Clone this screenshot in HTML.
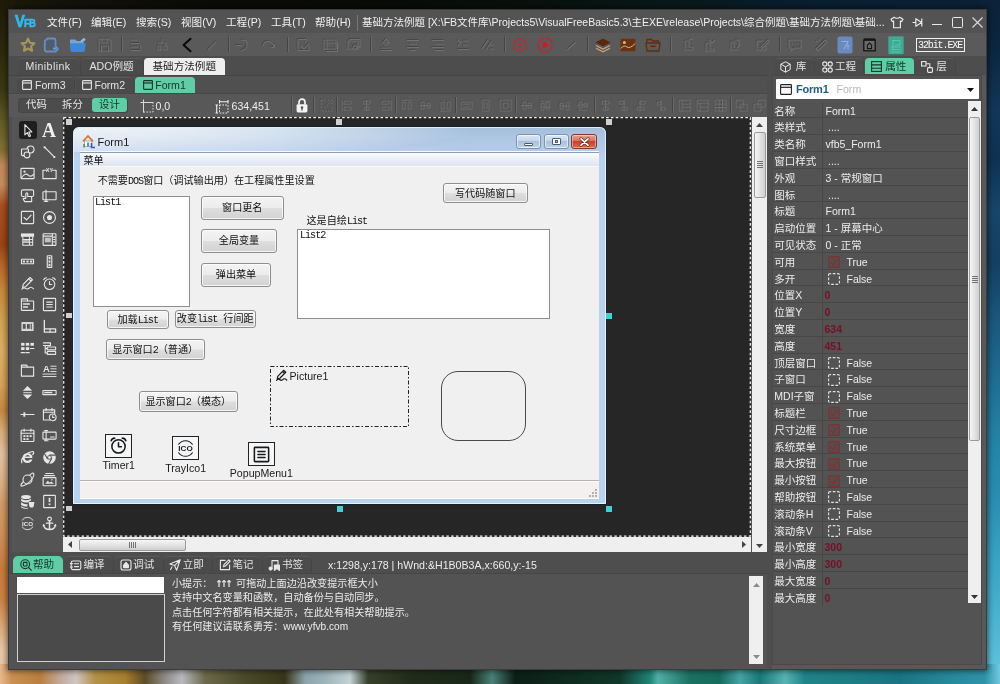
<!DOCTYPE html>
<html lang="zh-CN">
<head>
<meta charset="utf-8">
<title>VisualFreeBasic</title>
<style>
*{box-sizing:border-box;margin:0;padding:0}
html,body{width:1000px;height:684px;overflow:hidden;background:#0a0d10}
body{position:relative;font-family:"Liberation Sans","Noto Sans CJK SC",sans-serif;font-size:10.5px;color:#e6e6e6;-webkit-font-smoothing:antialiased}
.abs,.win div,.win span,.win svg,.bg div{position:absolute}
.t{white-space:nowrap;line-height:1}
svg{overflow:visible}
/* wallpaper strips */
.bg{position:absolute;left:0;top:0;width:1000px;height:684px;overflow:hidden}
.win{will-change:transform;position:absolute;left:9px;top:10px;width:977px;height:659px;background:#535353;box-shadow:0 0 0 1px #3c3c3c, 0 0 6px 2px rgba(0,0,0,.55)}
</style>
</head>
<body>

<div class="bg">
  <!-- top strip -->
  <div style="left:0;top:0;width:1000px;height:12px;background:linear-gradient(90deg,#1d1b08 0,#14130a 60px,#0b0b07 200px,#090c08 400px,#08120e 560px,#091a1e 700px,#0a1f33 820px,#0b2238 1000px)"></div>
  <!-- left strip -->
  <div style="left:0;top:0;width:14px;height:684px;background:linear-gradient(180deg,#1d1b08 0,#2a250c 40px,#3d3a14 90px,#65602a 125px,#857034 150px,#c48a5c 165px,#c98e62 185px,#a9501f 205px,#9c4517 245px,#b8672a 265px,#c88a3c 290px,#d3a352 320px,#dcb066 350px,#d8a458 385px,#c88844 410px,#d9ac78 430px,#e3c4a2 455px,#dcb48a 480px,#d39c66 505px,#d0905a 535px,#c87c3c 570px,#cc8446 600px,#dba878 625px,#e8c8a8 650px,#e9cbad 684px)"></div>
  <!-- right strip -->
  <div style="left:980px;top:0;width:20px;height:684px;background:linear-gradient(180deg,#0b2238 0,#0c2740 50px,#123759 110px,#0f3252 160px,#17466b 210px,#134063 260px,#1b577c 320px,#1f6e92 380px,#2583a6 440px,#2a8fb2 500px,#3aa3c4 560px,#4cb4d0 620px,#66c6e0 684px)"></div>
  <!-- bottom strip -->
  <div style="left:0;top:664px;width:1000px;height:20px;background:linear-gradient(90deg,#e8b890 0,#c99050 12px,#b88040 40px,#c3ada0 62px,#d0c6c2 76px,#b49248 95px,#a87f2e 125px,#5e4d28 145px,#8f8c88 165px,#b9b9c0 182px,#6c6a4a 205px,#4a4a2a 245px,#39371a 285px,#8ba3ab 305px,#9db4ba 325px,#c4d3d3 350px,#36402a 368px,#222e1c 410px,#182818 470px,#4a8278 492px,#0c2018 515px,#0e2a1e 560px,#10382a 620px,#1f8676 650px,#52b0a8 658px,#1a7262 690px,#176c5e 720px,#46a4a4 740px,#187a78 760px,#58b4b4 785px,#1f8488 805px,#1d7e86 850px,#1a7484 900px,#268a9c 950px,#2f94aa 985px,#70c8e0 1000px)"></div>
</div>

<style>
.menu .t{top:7px;font-size:10.6px;color:#f0f0f0}
.tbsep{width:1px;height:15px;top:28px;background:#6a6a6a;box-shadow:-1px 0 0 #444}
.ico{stroke:#6b6b6b;fill:none;stroke-width:1.2}
.tab{height:18px;border-radius:4px 4px 0 0;background:#4b4b4b;color:#e2e2e2;font-size:10.6px;line-height:17px;text-align:center;white-space:nowrap;box-shadow:inset 0 1px 0 #595959, 1px 0 0 #454545}
.tab.on{background:#5fcda6;color:#17352a;box-shadow:none}
.tab.wh{background:#eeeeee;color:#222;box-shadow:none}
</style>
<div class="win">
<!-- ===== menu bar (win-relative coords: x-9, y-10) ===== -->
<div class="menu" style="left:0;top:0;width:977px;height:23px">
  <span class="t" style="left:6px;top:3.6px;font-family:'Liberation Sans',sans-serif;font-weight:bold;font-size:16px;color:#2fbbee;letter-spacing:-1px;-webkit-text-stroke:0.7px #2fbbee;transform:scaleX(.92);transform-origin:0 0">V</span>
  <span class="t" style="left:15px;top:8px;font-family:'Liberation Sans',sans-serif;font-weight:bold;font-size:10.5px;color:#2fbbee;letter-spacing:-0.9px;-webkit-text-stroke:0.5px #2fbbee;transform:scaleX(.9);transform-origin:0 0">FB</span>
  <span class="t" style="left:38px">文件(F)</span>
  <span class="t" style="left:82px">编辑(E)</span>
  <span class="t" style="left:127px">搜索(S)</span>
  <span class="t" style="left:172px">视图(V)</span>
  <span class="t" style="left:217px">工程(P)</span>
  <span class="t" style="left:262px">工具(T)</span>
  <span class="t" style="left:306px">帮助(H)</span>
  <div style="left:348px;top:5px;width:1px;height:16px;background:#777"></div>
  <span class="t" id="ttl" style="left:353px;font-size:10.5px">基础方法例题 [X:\FB文件库\Projects5\VisualFreeBasic5.3\主EXE\release\Projects\综合例题\基础方法例题\基础...</span>
  <!-- caption icons -->
  <svg style="left:881px;top:6px" width="14" height="13" viewBox="0 0 14 13"><path d="M4.2 1.2 L1 3.2 L2.3 5.6 L3.6 5 L3.6 11.8 L10.4 11.8 L10.4 5 L11.7 5.6 L13 3.2 L9.8 1.2 C9 2.6 5 2.6 4.2 1.2 Z" fill="none" stroke="#efefef" stroke-width="1.1" stroke-linejoin="round"/></svg>
  <svg style="left:903px;top:7px" width="12" height="11" viewBox="0 0 12 11"><path d="M0.5 5.5 H4 M3.8 1.2 V9.8 M3.8 1.8 L9.6 5.5 L3.8 9.2 M9.8 1.5 V9.5" fill="none" stroke="#efefef" stroke-width="1.1"/></svg>
  <div style="left:923px;top:14px;width:10px;height:1.4px;background:#e8e8e8"></div>
  <div style="left:943px;top:7px;width:11px;height:11px;border:1.3px solid #e8e8e8;border-radius:1.5px"></div>
  <svg style="left:963px;top:7px" width="11" height="11" viewBox="0 0 11 11"><path d="M0.5 0.5 L10.5 10.5 M10.5 0.5 L0.5 10.5" stroke="#dcdcdc" stroke-width="1.1"/></svg>
</div>

<!-- ===== toolbar ===== -->
<div style="left:0;top:23px;width:977px;height:24px;background:#5a5a5a"></div>
<svg style="left:10.5px;top:27px" width="16" height="16" viewBox="0 0 16 16"><path d="M8 1.6 L9.9 5.7 L14.4 6.2 L11.1 9.3 L12 13.8 L8 11.5 L4 13.8 L4.9 9.3 L1.6 6.2 L6.1 5.7 Z" fill="none" stroke="#a5975b" stroke-width="2.1" stroke-linejoin="round"/></svg>
<svg style="left:34px;top:27px" width="18" height="16" viewBox="0 0 18 16"><path d="M4.5 1.5 H11 Q12.5 1.5 12.5 3 V9 L15 12 L12.5 14.5 H3 Q1.8 14.5 1.8 13 V4 Z" fill="none" stroke="#5f8fcb" stroke-width="1.8" stroke-linejoin="round"/><path d="M6.2 4 H9.2 V9.5 H6.2 Z" fill="#3e5f93"/><path d="M10 11.5 L13.5 11.5" stroke="#5fa0e6" stroke-width="2"/></svg>
<svg style="left:59.5px;top:27px" width="18" height="16" viewBox="0 0 18 16"><path d="M1 7 V2.4 H6.4 L7.8 4 H11.6 L15 0.8 L17 2.6 L14.6 5 V7 Z" fill="#7ba3d4"/><path d="M12 4.4 L15 1.6" stroke="#a9c6ea" stroke-width="1.2"/><path d="M1 6.2 H16 Q17 6.2 16.8 7.2 L15.8 14 Q15.6 15 14.6 15 H2.6 Q1.6 15 1.5 14 L0.8 7.2 Q0.8 6.2 1.8 6.2Z" fill="#3f86d4"/></svg>
<svg style="left:87.5px;top:27px" width="16" height="16" viewBox="0 0 16 16"><g fill="none" stroke="#424242" stroke-width="1.1" transform="translate(-0.7,-0.7)"><path d="M2 2 H12 L14 4 V14 H2 Z M5 2 V6 H10 V2 M4.5 14 V9 H11.5 V14"/></g><g fill="none" stroke="#717171" stroke-width="1.1"><path d="M2 2 H12 L14 4 V14 H2 Z M5 2 V6 H10 V2 M4.5 14 V9 H11.5 V14"/></g></svg>
<div class="tbsep" style="left:113px;top:27px"></div>
<svg style="left:119px;top:27px" width="16" height="16" viewBox="0 0 16 16"><g fill="none" stroke="#424242" stroke-width="1.1" transform="translate(-0.7,-0.7)"><path d="M3 3 H10 M3 6.5 H12 M3 10 H11 M3 13.5 H13 M12 8 Q14 9.5 12 12"/></g><g fill="none" stroke="#717171" stroke-width="1.1"><path d="M3 3 H10 M3 6.5 H12 M3 10 H11 M3 13.5 H13 M12 8 Q14 9.5 12 12"/></g></svg>
<svg style="left:145px;top:27px" width="16" height="16" viewBox="0 0 16 16"><g fill="none" stroke="#424242" stroke-width="1.1" transform="translate(-0.7,-0.7)"><path d="M8 2 V6 M4 6 H12 V9 M4 9 H7 V13 H4 Z M10 9 H13 V13 H10 Z"/></g><g fill="none" stroke="#717171" stroke-width="1.1"><path d="M8 2 V6 M4 6 H12 V9 M4 9 H7 V13 H4 Z M10 9 H13 V13 H10 Z"/></g></svg>
<svg style="left:169.5px;top:27px" width="16" height="16" viewBox="0 0 16 16"><path d="M11.5 1.8 L4.6 8 L11.5 14.2" fill="none" stroke="#0a0a0a" stroke-width="2.1" stroke-linecap="round" stroke-linejoin="round"/></svg>
<svg style="left:195px;top:27px" width="16" height="16" viewBox="0 0 16 16"><g fill="none" stroke="#424242" stroke-width="1.1" transform="translate(-0.7,-0.7)"><path d="M4 13 L12 5"/></g><g fill="none" stroke="#717171" stroke-width="1.1"><path d="M4 13 L12 5"/></g></svg>
<div class="tbsep" style="left:220px;top:27px"></div>
<svg style="left:225px;top:27px" width="16" height="16" viewBox="0 0 16 16"><g fill="none" stroke="#424242" stroke-width="1.1" transform="translate(-0.7,-0.7)"><path d="M1.5 8.5 H8 M7 3 Q13.5 2.5 13 8 Q12.4 13 6.5 14"/></g><g fill="none" stroke="#717171" stroke-width="1.1"><path d="M1.5 8.5 H8 M7 3 Q13.5 2.5 13 8 Q12.4 13 6.5 14"/></g></svg>
<svg style="left:251px;top:27px" width="16" height="16" viewBox="0 0 16 16"><g fill="none" stroke="#424242" stroke-width="1.1" transform="translate(-0.7,-0.7)"><path d="M3 9 Q4 3.5 9 4.5 Q13 5.5 14 11 M14 11 L14.5 7 M14 11 L10.5 10"/></g><g fill="none" stroke="#717171" stroke-width="1.1"><path d="M3 9 Q4 3.5 9 4.5 Q13 5.5 14 11 M14 11 L14.5 7 M14 11 L10.5 10"/></g></svg>
<div class="tbsep" style="left:278.5px;top:27px"></div>
<svg style="left:287px;top:27px" width="16" height="16" viewBox="0 0 16 16"><g fill="none" stroke="#424242" stroke-width="1.1" transform="translate(-0.7,-0.7)"><path d="M2 2.5 H10 V6 M2 2.5 V13.5 H13 V8 M5 9 L8 12 L13 6"/></g><g fill="none" stroke="#717171" stroke-width="1.1"><path d="M2 2.5 H10 V6 M2 2.5 V13.5 H13 V8 M5 9 L8 12 L13 6"/></g></svg>
<svg style="left:313px;top:27px" width="16" height="16" viewBox="0 0 16 16"><g fill="none" stroke="#424242" stroke-width="1.1" transform="translate(-0.7,-0.7)"><path d="M2 3 H14 V12 H2 Z M5 3 V12 M5 6 H14 M4 14.5 H15.5 V5"/></g><g fill="none" stroke="#717171" stroke-width="1.1"><path d="M2 3 H14 V12 H2 Z M5 3 V12 M5 6 H14 M4 14.5 H15.5 V5"/></g></svg>
<svg style="left:337px;top:27px" width="16" height="16" viewBox="0 0 16 16"><g fill="none" stroke="#424242" stroke-width="1.1" transform="translate(-0.7,-0.7)"><path d="M2 4 H12 V12 H2 Z M4 4 V2.5 H14 V10 H12 M9 8.5 a2 2 0 1 0 0.1 0"/></g><g fill="none" stroke="#717171" stroke-width="1.1"><path d="M2 4 H12 V12 H2 Z M4 4 V2.5 H14 V10 H12 M9 8.5 a2 2 0 1 0 0.1 0"/></g></svg>
<div class="tbsep" style="left:361.5px;top:27px"></div>
<svg style="left:369px;top:27px" width="16" height="16" viewBox="0 0 16 16"><g fill="none" stroke="#424242" stroke-width="1.1" transform="translate(-0.7,-0.7)"><path d="M2 13.5 H14 M3 11 H12 M6 8 H10 M8 2 L11 6 H5 Z"/></g><g fill="none" stroke="#717171" stroke-width="1.1"><path d="M2 13.5 H14 M3 11 H12 M6 8 H10 M8 2 L11 6 H5 Z"/></g></svg>
<svg style="left:395.5px;top:27px" width="16" height="16" viewBox="0 0 16 16"><g fill="none" stroke="#424242" stroke-width="1.1" transform="translate(-0.7,-0.7)"><path d="M2 3.5 H14 M4 7 H12 M2 10.5 H14 M5 13.5 H11"/></g><g fill="none" stroke="#717171" stroke-width="1.1"><path d="M2 3.5 H14 M4 7 H12 M2 10.5 H14 M5 13.5 H11"/></g></svg>
<svg style="left:420.5px;top:27px" width="16" height="16" viewBox="0 0 16 16"><g fill="none" stroke="#424242" stroke-width="1.1" transform="translate(-0.7,-0.7)"><path d="M2 3.5 H14 M5 7 H14 M2 10.5 H14 M5 13.5 H14"/></g><g fill="none" stroke="#717171" stroke-width="1.1"><path d="M2 3.5 H14 M5 7 H14 M2 10.5 H14 M5 13.5 H14"/></g></svg>
<svg style="left:445.5px;top:27px" width="16" height="16" viewBox="0 0 16 16"><g fill="none" stroke="#424242" stroke-width="1.1" transform="translate(-0.7,-0.7)"><path d="M3 3 L6 6 L3 9 M8 4 H14 M8 8 H13 M3 12.5 H14"/></g><g fill="none" stroke="#717171" stroke-width="1.1"><path d="M3 3 L6 6 L3 9 M8 4 H14 M8 8 H13 M3 12.5 H14"/></g></svg>
<svg style="left:470.5px;top:27px" width="16" height="16" viewBox="0 0 16 16"><g fill="none" stroke="#424242" stroke-width="1.1" transform="translate(-0.7,-0.7)"><path d="M2 12 L8 3 M6 13 L12 4 M9 8 H14 M10 12 H14"/></g><g fill="none" stroke="#717171" stroke-width="1.1"><path d="M2 12 L8 3 M6 13 L12 4 M9 8 H14 M10 12 H14"/></g></svg>
<div class="tbsep" style="left:495.5px;top:27px"></div>
<svg style="left:502.5px;top:27px" width="16" height="16" viewBox="0 0 16 16"><path d="M8 1.2 L14.2 4.6 V11.4 L8 14.8 L1.8 11.4 V4.6 Z" fill="none" stroke="#c2282c" stroke-width="1.1"/><path d="M8 8.2 V12 M8 8.2 L4.8 6.2 M8 8.2 L11.2 6.2" fill="none" stroke="#c2282c" stroke-width="1.1"/></svg>
<svg style="left:528px;top:27px" width="16" height="16" viewBox="0 0 16 16"><circle cx="8" cy="8" r="7" fill="none" stroke="#cc1f26" stroke-width="1.2"/><path d="M5.8 4 L12 8 L5.8 12 Z" fill="#d41820"/></svg>
<svg style="left:554px;top:27px" width="16" height="16" viewBox="0 0 16 16"><g fill="none" stroke="#424242" stroke-width="1.1" transform="translate(-0.7,-0.7)"><path d="M4 13 L13 5"/></g><g fill="none" stroke="#717171" stroke-width="1.1"><path d="M4 13 L13 5"/></g></svg>
<div class="tbsep" style="left:578.5px;top:27px"></div>
<svg style="left:585.5px;top:27px" width="16" height="16" viewBox="0 0 16 16"><path d="M8 1.5 L15.5 5.5 L8 9.5 L0.5 5.5 Z" fill="#5a260c"/><path d="M1 8.5 L8 12 L15 8.5 M1 11.3 L8 14.8 L15 11.3" fill="none" stroke="#c7a57c" stroke-width="1.2"/></svg>
<svg style="left:611px;top:27px" width="16" height="16" viewBox="0 0 16 16"><rect x="0.5" y="1.8" width="15" height="12.4" rx="1.2" fill="#6b3210"/><circle cx="4.4" cy="5.4" r="1.5" fill="#d9b48c"/><path d="M0.8 11.5 Q4 7.5 7 10 Q10 12 15.2 6.5" fill="none" stroke="#d9b48c" stroke-width="1"/></svg>
<svg style="left:636px;top:27px" width="16" height="16" viewBox="0 0 16 16"><path d="M2 5 V2.5 H6.5 L8 4 H13.5 V5.8 M1 6 H15 L14 14 H2 Z" fill="none" stroke="#5f2c10" stroke-width="1.3" stroke-linejoin="round"/><path d="M5.5 9.3 H10.5" stroke="#5f2c10" stroke-width="1.6"/></svg>
<div class="tbsep" style="left:661.5px;top:27px"></div>
<svg style="left:670.5px;top:27px" width="16" height="16" viewBox="0 0 16 16"><g fill="none" stroke="#424242" stroke-width="1.1" transform="translate(-0.7,-0.7)"><path d="M5 4 H9 V10 M5 4 V13 H13 V10 H9 M9 2 H13"/></g><g fill="none" stroke="#717171" stroke-width="1.1"><path d="M5 4 H9 V10 M5 4 V13 H13 V10 H9 M9 2 H13"/></g></svg>
<svg style="left:693px;top:27px" width="16" height="16" viewBox="0 0 16 16"><g fill="none" stroke="#424242" stroke-width="1.1" transform="translate(-0.7,-0.7)"><path d="M4 6 H8 V12 M4 6 V14 H12 V12 H8 M7 3 L10 6 L13 3"/></g><g fill="none" stroke="#717171" stroke-width="1.1"><path d="M4 6 H8 V12 M4 6 V14 H12 V12 H8 M7 3 L10 6 L13 3"/></g></svg>
<svg style="left:718px;top:27px" width="16" height="16" viewBox="0 0 16 16"><g fill="none" stroke="#424242" stroke-width="1.1" transform="translate(-0.7,-0.7)"><path d="M4 5 H7 V11 M4 5 V13 H11 M9 3 H12 V9 M10 11 L13 8"/></g><g fill="none" stroke="#717171" stroke-width="1.1"><path d="M4 5 H7 V11 M4 5 V13 H11 M9 3 H12 V9 M10 11 L13 8"/></g></svg>
<svg style="left:745.5px;top:27px" width="16" height="16" viewBox="0 0 16 16"><g fill="none" stroke="#424242" stroke-width="1.1" transform="translate(-0.7,-0.7)"><path d="M2 4 H9 M2 4 V13 H11 V9 M6 10 L13 3 L14.5 4.5 L7.5 11.5 Z"/></g><g fill="none" stroke="#717171" stroke-width="1.1"><path d="M2 4 H9 M2 4 V13 H11 V9 M6 10 L13 3 L14.5 4.5 L7.5 11.5 Z"/></g></svg>
<div class="tbsep" style="left:770.5px;top:27px"></div>
<svg style="left:778px;top:27px" width="16" height="16" viewBox="0 0 16 16"><g fill="none" stroke="#424242" stroke-width="1.1" transform="translate(-0.7,-0.7)"><path d="M2 3 H14 V11 H7 L4 14 V11 H2 Z M5 7 H6 M8 7 H9 M11 7 H12"/></g><g fill="none" stroke="#717171" stroke-width="1.1"><path d="M2 3 H14 V11 H7 L4 14 V11 H2 Z M5 7 H6 M8 7 H9 M11 7 H12"/></g></svg>
<svg style="left:803.5px;top:27px" width="16" height="16" viewBox="0 0 16 16"><g fill="none" stroke="#424242" stroke-width="1.1" transform="translate(-0.7,-0.7)"><path d="M3 12 L12 3 L14 5 L5 14 Z M3 4 L5 5 M6 2 L7 4"/></g><g fill="none" stroke="#717171" stroke-width="1.1"><path d="M3 12 L12 3 L14 5 L5 14 Z M3 4 L5 5 M6 2 L7 4"/></g></svg>
<svg style="left:828px;top:26px" width="16" height="18" viewBox="0 0 16 18"><rect x="0.5" y="0.5" width="15" height="17" rx="2" fill="#6a8abd"/><path d="M4 5.5 H11 L7 13 M9.5 10 H12.5 M11 8.5 V13.5" fill="none" stroke="#8eaedb" stroke-width="1.2"/></svg>
<svg style="left:854px;top:28px" width="13" height="14" viewBox="0 0 13 14"><rect x="0.8" y="2.2" width="11.4" height="10.6" fill="#6a6a6a" stroke="#141414" stroke-width="1.3"/><path d="M0.8 1.2 H12.2" stroke="#141414" stroke-width="1.6"/><path d="M6.5 5 L8.6 7.2 V10.6 H4.4 V7.2 Z" fill="none" stroke="#141414" stroke-width="1.1"/></svg>
<svg style="left:878.5px;top:25.7px" width="16" height="18.6" viewBox="0 0 16 18.6"><rect x="0.3" y="0.3" width="15.4" height="18" rx="1.2" fill="#3fa992"/><path d="M4 4.5 H12 V9 H7 M5 4.5 V13 M3 11 H13 M3 13.5 H13 M3 16 H13" fill="none" stroke="#5cc4ac" stroke-width="1"/></svg>
<div style="left:907px;top:27.5px;width:48.5px;height:14.5px;border:1.2px solid #f2f2f2"></div>
<span class="t" style="left:909px;top:31px;font-family:'Liberation Mono',monospace;font-size:10px;letter-spacing:-1.1px;color:#fafafa">32bit.EXE</span>

<!-- ===== bands ===== -->
<div style="left:0px;top:46px;width:758px;height:18.5px;background:#4d4d4d"></div>
<div style="left:0px;top:64.5px;width:758px;height:1px;background:#444"></div>
<div style="left:0px;top:65.5px;width:758px;height:17.5px;background:#505050"></div>
<div style="left:0px;top:83px;width:758px;height:1px;background:#484848"></div>
<div style="left:0px;top:84px;width:758px;height:23px;background:#585858"></div>
<div class="tab " style="left:7.5px;top:48px;width:63px;height:17px;line-height:16.5px;"><span style="position:static;letter-spacing:.4px">Miniblink</span></div>
<div class="tab " style="left:71.5px;top:48px;width:62px;height:17px;line-height:16.5px;">ADO例题</div>
<div class="tab wh" style="left:135px;top:48px;width:80.5px;height:17px;line-height:16.5px;">基础方法例题</div>
<div class="tab " style="left:8px;top:66.5px;width:57px;height:16.5px;line-height:17.2px;padding-left:9.5px;">Form3</div>
<svg style="left:12.5px;top:70px" width="10" height="10" viewBox="0 0 10 10"><rect x="0.6" y="0.6" width="8.8" height="8.8" rx="0.6" fill="none" stroke="#e2e2e2" stroke-width="1.1"/><path d="M0.6 3 H9.4" stroke="#e2e2e2" stroke-width="1.2"/></svg>
<div class="tab " style="left:67px;top:66.5px;width:57px;height:16.5px;line-height:17.2px;padding-left:10.5px;">Form2</div>
<svg style="left:73px;top:70px" width="10" height="10" viewBox="0 0 10 10"><rect x="0.6" y="0.6" width="8.8" height="8.8" rx="0.6" fill="none" stroke="#e2e2e2" stroke-width="1.1"/><path d="M0.6 3 H9.4" stroke="#e2e2e2" stroke-width="1.2"/></svg>
<div class="tab on" style="left:126px;top:66.5px;width:60px;height:16.1px;line-height:17.2px;padding-left:11px;">Form1</div>
<svg style="left:133.5px;top:70px" width="10" height="10" viewBox="0 0 10 10"><rect x="0.6" y="0.6" width="8.8" height="8.8" rx="0.6" fill="none" stroke="#17352a" stroke-width="1.1"/><path d="M0.6 3 H9.4" stroke="#17352a" stroke-width="1.2"/></svg>
<div style="left:9px;top:87.5px;width:110px;height:15.5px;border-radius:4px;background:#4c4c4c;box-shadow:inset 0 0 0 1px #464646"></div>
<div class="t" style="left:10px;top:88.2px;width:35px;height:14.2px;line-height:13.6px;text-align:center;font-size:10.4px;color:#e6e6e6;">代码</div>
<div class="t" style="left:46px;top:88.2px;width:35px;height:14.2px;line-height:13.6px;text-align:center;font-size:10.4px;color:#e6e6e6;">拆分</div>
<div class="t" style="left:83px;top:88.2px;width:35px;height:14.2px;line-height:13.6px;text-align:center;font-size:10.4px;background:#5fcda6;color:#17352a;border-radius:3px;">设计</div>
<svg style="left:131px;top:89px" width="14" height="14" viewBox="0 0 14 14"><path d="M3.5 0.5 V13.5 M0.5 3.5 H13.5" stroke="#d8d8d8" stroke-width="1" fill="none"/><rect x="3.5" y="3.5" width="9.5" height="9.5" fill="none" stroke="#d8d8d8" stroke-width="1" stroke-dasharray="1.6 1.4"/></svg>
<span class="t" style="left:146.5px;top:91px;font-size:10.6px;color:#ededed">0,0</span>
<svg style="left:206px;top:88.5px" width="14" height="15" viewBox="0 0 14 15"><path d="M4.5 1 V4.5 M13 1 V4.5 M4.5 2.7 H13 M0.5 6 H3 M0.5 14 H3 M1.7 6 V14" stroke="#f0f0f0" stroke-width="1.1" fill="none"/><rect x="4.5" y="6" width="8.5" height="8" fill="none" stroke="#f0f0f0" stroke-width="1" stroke-dasharray="1.6 1.3"/></svg>
<span class="t" style="left:222.5px;top:91px;font-size:10.6px;color:#ededed">634,451</span>
<div class="tbsep" style="left:282.5px;top:87px;height:16px"></div>
<svg style="left:287px;top:87.5px" width="12" height="15" viewBox="0 0 12 15"><path d="M3 6.5 V4.2 a3 3 0 0 1 6 0 V6.5" fill="none" stroke="#f4f4f4" stroke-width="1.7"/><rect x="0.6" y="6.2" width="10.8" height="8.2" rx="1.4" fill="#f4f4f4"/><circle cx="6" cy="9.6" r="1.3" fill="#555"/><rect x="5.4" y="9.8" width="1.2" height="2.8" fill="#555"/></svg>
<div class="tbsep" style="left:305px;top:87px;height:16px"></div>
<svg style="left:310.5px;top:89px" width="13" height="13" viewBox="0 0 13 13"><g fill="none" stroke="#454545" stroke-width="1" transform="translate(-0.6,-0.6)"><path d="M1 1 H5 M1 1 V12 H12 V8 M4 9 L11 2 M8 1 H12 V5" stroke-dasharray="2 1"/></g><g fill="none" stroke="#707070" stroke-width="1"><path d="M1 1 H5 M1 1 V12 H12 V8 M4 9 L11 2 M8 1 H12 V5" stroke-dasharray="2 1"/></g></svg>
<div class="tbsep" style="left:328px;top:87px;height:16px"></div>
<svg style="left:332px;top:89px" width="13" height="13" viewBox="0 0 13 13"><g fill="none" stroke="#454545" stroke-width="1" transform="translate(-0.6,-0.6)"><path d="M3 2 H10 V5 H3 Z M3 8 H10 V11 H3 Z M1 1 V12"/></g><g fill="none" stroke="#707070" stroke-width="1"><path d="M3 2 H10 V5 H3 Z M3 8 H10 V11 H3 Z M1 1 V12"/></g></svg>
<svg style="left:350.5px;top:89px" width="13" height="13" viewBox="0 0 13 13"><g fill="none" stroke="#454545" stroke-width="1" transform="translate(-0.6,-0.6)"><path d="M3 2 H10 V5 H3 Z M4 8 H9 V11 H4 Z M6.5 1 V12"/></g><g fill="none" stroke="#707070" stroke-width="1"><path d="M3 2 H10 V5 H3 Z M4 8 H9 V11 H4 Z M6.5 1 V12"/></g></svg>
<svg style="left:369.5px;top:89px" width="13" height="13" viewBox="0 0 13 13"><g fill="none" stroke="#454545" stroke-width="1" transform="translate(-0.6,-0.6)"><path d="M3 2 H10 V5 H3 Z M3 8 H10 V11 H3 Z M12 1 V12"/></g><g fill="none" stroke="#707070" stroke-width="1"><path d="M3 2 H10 V5 H3 Z M3 8 H10 V11 H3 Z M12 1 V12"/></g></svg>
<svg style="left:390.5px;top:89px" width="13" height="13" viewBox="0 0 13 13"><g fill="none" stroke="#454545" stroke-width="1" transform="translate(-0.6,-0.6)"><path d="M2 3 H5 V10 H2 Z M8 3 H11 V10 H8 Z M1 1 H12"/></g><g fill="none" stroke="#707070" stroke-width="1"><path d="M2 3 H5 V10 H2 Z M8 3 H11 V10 H8 Z M1 1 H12"/></g></svg>
<svg style="left:409.5px;top:89px" width="13" height="13" viewBox="0 0 13 13"><g fill="none" stroke="#454545" stroke-width="1" transform="translate(-0.6,-0.6)"><path d="M2 3 H5 V10 H2 Z M8 4 H11 V9 H8 Z M1 6.5 H12"/></g><g fill="none" stroke="#707070" stroke-width="1"><path d="M2 3 H5 V10 H2 Z M8 4 H11 V9 H8 Z M1 6.5 H12"/></g></svg>
<svg style="left:429.5px;top:89px" width="13" height="13" viewBox="0 0 13 13"><g fill="none" stroke="#454545" stroke-width="1" transform="translate(-0.6,-0.6)"><path d="M2 3 H5 V10 H2 Z M8 3 H11 V10 H8 Z M1 12 H12"/></g><g fill="none" stroke="#707070" stroke-width="1"><path d="M2 3 H5 V10 H2 Z M8 3 H11 V10 H8 Z M1 12 H12"/></g></svg>
<svg style="left:450.5px;top:89px" width="13" height="13" viewBox="0 0 13 13"><g fill="none" stroke="#454545" stroke-width="1" transform="translate(-0.6,-0.6)"><path d="M1 3 H12 V10 H1 Z M3 5 H10 M3 8 H10"/></g><g fill="none" stroke="#707070" stroke-width="1"><path d="M1 3 H12 V10 H1 Z M3 5 H10 M3 8 H10"/></g></svg>
<svg style="left:469.5px;top:89px" width="13" height="13" viewBox="0 0 13 13"><g fill="none" stroke="#454545" stroke-width="1" transform="translate(-0.6,-0.6)"><path d="M3 1 V12 H10 V1 Z M5 3 V10 M8 3 V10"/></g><g fill="none" stroke="#707070" stroke-width="1"><path d="M3 1 V12 H10 V1 Z M5 3 V10 M8 3 V10"/></g></svg>
<svg style="left:489.5px;top:89px" width="13" height="13" viewBox="0 0 13 13"><g fill="none" stroke="#454545" stroke-width="1" transform="translate(-0.6,-0.6)"><path d="M1 1 H12 V12 H1 Z M4 4 H9 V9 H4 Z"/></g><g fill="none" stroke="#707070" stroke-width="1"><path d="M1 1 H12 V12 H1 Z M4 4 H9 V9 H4 Z"/></g></svg>
<svg style="left:510.5px;top:89px" width="13" height="13" viewBox="0 0 13 13"><g fill="none" stroke="#454545" stroke-width="1" transform="translate(-0.6,-0.6)"><path d="M1 6.5 H12 M3 3 H6 V10 H3 Z M8 4 H11 V9 H8 Z"/></g><g fill="none" stroke="#707070" stroke-width="1"><path d="M1 6.5 H12 M3 3 H6 V10 H3 Z M8 4 H11 V9 H8 Z"/></g></svg>
<svg style="left:529.5px;top:89px" width="13" height="13" viewBox="0 0 13 13"><g fill="none" stroke="#454545" stroke-width="1" transform="translate(-0.6,-0.6)"><path d="M1 8 H12 M2 4 H5 V11 H2 Z M7 3 H10 V10 H7 Z M1 2 H12"/></g><g fill="none" stroke="#707070" stroke-width="1"><path d="M1 8 H12 M2 4 H5 V11 H2 Z M7 3 H10 V10 H7 Z M1 2 H12"/></g></svg>
<svg style="left:548.5px;top:89px" width="13" height="13" viewBox="0 0 13 13"><g fill="none" stroke="#454545" stroke-width="1" transform="translate(-0.6,-0.6)"><path d="M1 7 H12 M2 4 H5 V10 H2 Z M8 3 H11 V11 H8 Z"/></g><g fill="none" stroke="#707070" stroke-width="1"><path d="M1 7 H12 M2 4 H5 V10 H2 Z M8 3 H11 V11 H8 Z"/></g></svg>
<svg style="left:567px;top:89px" width="13" height="13" viewBox="0 0 13 13"><g fill="none" stroke="#454545" stroke-width="1" transform="translate(-0.6,-0.6)"><path d="M1 6 H12 M3 3 H6 V9 H3 Z M8 4 H11 V8 H8 Z M2 11 H11"/></g><g fill="none" stroke="#707070" stroke-width="1"><path d="M1 6 H12 M3 3 H6 V9 H3 Z M8 4 H11 V8 H8 Z M2 11 H11"/></g></svg>
<svg style="left:589.5px;top:89px" width="13" height="13" viewBox="0 0 13 13"><g fill="none" stroke="#454545" stroke-width="1" transform="translate(-0.6,-0.6)"><path d="M6.5 1 V12 M3 2 H10 V5 H3 Z M4 8 H9 V11 H4 Z"/></g><g fill="none" stroke="#707070" stroke-width="1"><path d="M6.5 1 V12 M3 2 H10 V5 H3 Z M4 8 H9 V11 H4 Z"/></g></svg>
<svg style="left:607px;top:89px" width="13" height="13" viewBox="0 0 13 13"><g fill="none" stroke="#454545" stroke-width="1" transform="translate(-0.6,-0.6)"><path d="M8 1 V12 M3 2 H8 V5 H3 Z M5 8 H11 V11 H5 Z"/></g><g fill="none" stroke="#707070" stroke-width="1"><path d="M8 1 V12 M3 2 H8 V5 H3 Z M5 8 H11 V11 H5 Z"/></g></svg>
<svg style="left:625.5px;top:89px" width="13" height="13" viewBox="0 0 13 13"><g fill="none" stroke="#454545" stroke-width="1" transform="translate(-0.6,-0.6)"><path d="M5 1 V12 M5 2 H10 V5 H5 Z M2 8 H9 V11 H2 Z"/></g><g fill="none" stroke="#707070" stroke-width="1"><path d="M5 1 V12 M5 2 H10 V5 H5 Z M2 8 H9 V11 H2 Z"/></g></svg>
<svg style="left:644.5px;top:89px" width="13" height="13" viewBox="0 0 13 13"><g fill="none" stroke="#454545" stroke-width="1" transform="translate(-0.6,-0.6)"><path d="M7 1 V12 M3 3 H7 V6 H3 Z M7 8 H11 V11 H7 Z"/></g><g fill="none" stroke="#707070" stroke-width="1"><path d="M7 1 V12 M3 3 H7 V6 H3 Z M7 8 H11 V11 H7 Z"/></g></svg>
<svg style="left:668.5px;top:89px" width="13" height="13" viewBox="0 0 13 13"><g fill="none" stroke="#454545" stroke-width="1" transform="translate(-0.6,-0.6)"><path d="M1 1 H12 V12 H1 Z M4 1 V12 M4 5 H12 M4 8 H12"/></g><g fill="none" stroke="#707070" stroke-width="1"><path d="M1 1 H12 V12 H1 Z M4 1 V12 M4 5 H12 M4 8 H12"/></g></svg>
<svg style="left:686.5px;top:89px" width="13" height="13" viewBox="0 0 13 13"><g fill="none" stroke="#454545" stroke-width="1" transform="translate(-0.6,-0.6)"><path d="M1 1 H12 V12 H1 Z M1 4 H12 M4 4 V12 M4 8 H12"/></g><g fill="none" stroke="#707070" stroke-width="1"><path d="M1 1 H12 V12 H1 Z M1 4 H12 M4 4 V12 M4 8 H12"/></g></svg>
<svg style="left:704.5px;top:89px" width="13" height="13" viewBox="0 0 13 13"><g fill="none" stroke="#454545" stroke-width="1" transform="translate(-0.6,-0.6)"><path d="M1 1 H12 V12 H1 Z M1 5 H12 M1 8.5 H12 M5 1 V12 M8.5 1 V12"/></g><g fill="none" stroke="#707070" stroke-width="1"><path d="M1 1 H12 V12 H1 Z M1 5 H12 M1 8.5 H12 M5 1 V12 M8.5 1 V12"/></g></svg>
<svg style="left:725.5px;top:89px" width="13" height="13" viewBox="0 0 13 13"><g fill="none" stroke="#454545" stroke-width="1" transform="translate(-0.6,-0.6)"><path d="M1 1 H8 V8 H1 Z M5 5 H12 V12 H5 Z"/></g><g fill="none" stroke="#707070" stroke-width="1"><path d="M1 1 H8 V8 H1 Z M5 5 H12 V12 H5 Z"/></g></svg>
<svg style="left:743.5px;top:89px" width="13" height="13" viewBox="0 0 13 13"><g fill="none" stroke="#454545" stroke-width="1" transform="translate(-0.6,-0.6)"><path d="M5 1 H12 V8 H5 Z M1 5 H8 V12 H1 Z"/></g><g fill="none" stroke="#707070" stroke-width="1"><path d="M5 1 H12 V8 H5 Z M1 5 H8 V12 H1 Z"/></g></svg>
<div class="tbsep" style="left:387px;top:87px;height:16px"></div>
<div class="tbsep" style="left:447px;top:87px;height:16px"></div>
<div class="tbsep" style="left:506.5px;top:87px;height:16px"></div>
<div class="tbsep" style="left:585.5px;top:87px;height:16px"></div>
<div class="tbsep" style="left:663.5px;top:87px;height:16px"></div>
<div class="tbsep" style="left:722px;top:87px;height:16px"></div>

<!-- ===== toolbox ===== -->
<div style="left:0px;top:107px;width:54px;height:436px;background:#545454"></div>
<div style="left:0px;top:107px;width:6px;height:436px;background:linear-gradient(90deg,#4c4c4c,#585858)"></div>
<div style="left:9.8px;top:111px;width:18.6px;height:18.4px;border-radius:3px;background:#1e1e1e"></div>
<svg style="left:11.3px;top:112.8px" width="15.04" height="15.04" viewBox="0 0 16 16"><g fill="none" stroke="#e6e6e6" stroke-width="1.2" stroke-linejoin="round" stroke-linecap="round"><path d="M5.2 1.8 V12.6 L7.8 10.2 L9.6 14.4 L11.2 13.7 L9.4 9.6 L12.6 9.4 Z"/></g></svg>
<span class="t" style="left:32px;top:110.1px;width:16px;text-align:center;font-family:'Liberation Serif',serif;font-weight:bold;font-size:21.5px;color:#f0f0f0;transform:scaleX(.9)">A</span>
<svg style="left:11.3px;top:134.6px" width="15.04" height="15.04" viewBox="0 0 16 16"><g fill="none" stroke="#e6e6e6" stroke-width="1.2" stroke-linejoin="round" stroke-linecap="round"><circle cx="11.2" cy="4.8" r="3.7"/><rect x="1.6" y="4.3" width="7.4" height="7" rx="0.8" fill="#545454"/><circle cx="7.4" cy="10.6" r="3.1" fill="#545454"/></g></svg>
<svg style="left:32.9px;top:134.6px" width="15.04" height="15.04" viewBox="0 0 16 16"><g fill="none" stroke="#e6e6e6" stroke-width="1.2" stroke-linejoin="round" stroke-linecap="round"><path d="M3 2.6 L13 12.6"/><circle cx="2.8" cy="2.4" r="1.2" fill="#e6e6e6" stroke="none"/><circle cx="13.2" cy="12.8" r="1.2" fill="#e6e6e6" stroke="none"/></g></svg>
<svg style="left:11.3px;top:156.4px" width="15.04" height="15.04" viewBox="0 0 16 16"><g fill="none" stroke="#e6e6e6" stroke-width="1.2" stroke-linejoin="round" stroke-linecap="round"><rect x="1" y="2.5" width="14" height="11" rx="0.8"/><circle cx="4.8" cy="6" r="1.2" fill="#e6e6e6" stroke="none"/><path d="M1.5 12.5 Q6 6.5 9 10 Q11 12 14.5 9"/></g></svg>
<svg style="left:32.9px;top:156.4px" width="15.04" height="15.04" viewBox="0 0 16 16"><g fill="none" stroke="#e6e6e6" stroke-width="1.2" stroke-linejoin="round" stroke-linecap="round"><path d="M5 4.5 H1 V13.5 H15 V4.5 H11"/><text x="8" y="6.3" font-family="Liberation Sans,sans-serif" font-size="5.5" font-weight="bold" text-anchor="middle" fill="#e6e6e6" stroke="none">XY</text></g></svg>
<svg style="left:11.3px;top:178.3px" width="15.04" height="15.04" viewBox="0 0 16 16"><g fill="none" stroke="#e6e6e6" stroke-width="1.2" stroke-linejoin="round" stroke-linecap="round"><path d="M4.5 9 H3 Q1.5 9 1.5 7.5 V3.5 Q1.5 2 3 2 H13 Q14.5 2 14.5 3.5 V7.5 Q14.5 9 13 9 H10"/><path d="M6.2 11 V6.2 Q6.2 5.2 7.2 5.2 Q8.2 5.2 8.2 6.2 V9 H11 Q12.4 9 12.4 10.4 V14.5 H5 L3.4 11.8 Q3.4 11 4.4 11 Z"/></g></svg>
<svg style="left:32.9px;top:178.3px" width="15.04" height="15.04" viewBox="0 0 16 16"><g fill="none" stroke="#e6e6e6" stroke-width="1.2" stroke-linejoin="round" stroke-linecap="round"><rect x="1" y="4" width="14" height="8.5" rx="0.6"/><path d="M4.3 2.2 V14.2 M2.5 14.2 H6.2"/></g></svg>
<svg style="left:11.3px;top:200.1px" width="15.04" height="15.04" viewBox="0 0 16 16"><g fill="none" stroke="#e6e6e6" stroke-width="1.2" stroke-linejoin="round" stroke-linecap="round"><rect x="1.5" y="1.5" width="13" height="13" rx="0.8"/><path d="M4.3 8 L7 10.6 L11.8 5.4"/></g></svg>
<svg style="left:32.9px;top:200.1px" width="15.04" height="15.04" viewBox="0 0 16 16"><g fill="none" stroke="#e6e6e6" stroke-width="1.2" stroke-linejoin="round" stroke-linecap="round"><circle cx="8" cy="8" r="6.3"/><circle cx="8" cy="8" r="2.7" fill="#e6e6e6" stroke="none"/></g></svg>
<svg style="left:11.3px;top:221.9px" width="15.04" height="15.04" viewBox="0 0 16 16"><g fill="none" stroke="#e6e6e6" stroke-width="1.2" stroke-linejoin="round" stroke-linecap="round"><rect x="1" y="1.5" width="14" height="3.6" fill="#e6e6e6" stroke="none"/><path d="M3 5 V14.2 H13.5 V5 M10 5 V14.2 M3 8 H13.5 M3 11 H13.5" stroke-width="1.1"/><path d="M3.6 8.6 H9.4 V10.4 H3.6 Z" fill="#e6e6e6" stroke="none" opacity=".7"/></g></svg>
<svg style="left:32.9px;top:221.9px" width="15.04" height="15.04" viewBox="0 0 16 16"><g fill="none" stroke="#e6e6e6" stroke-width="1.2" stroke-linejoin="round" stroke-linecap="round"><rect x="1.2" y="1.8" width="13.6" height="12.4" rx="0.6"/><path d="M11 2 V14 M1.5 4.4 H11"/><rect x="3" y="6" width="6.4" height="5" fill="#e6e6e6" stroke="none" opacity=".75"/><path d="M12.3 5.5 H13.7 M12.3 8 H13.7 M12.3 10.5 H13.7"/></g></svg>
<svg style="left:11.3px;top:243.8px" width="15.04" height="15.04" viewBox="0 0 16 16"><g fill="none" stroke="#e6e6e6" stroke-width="1.2" stroke-linejoin="round" stroke-linecap="round"><rect x="1.6" y="5.6" width="12.8" height="4.8" rx="0.4"/><rect x="3" y="7" width="2.4" height="2" fill="#e6e6e6" stroke="none"/><rect x="6.8" y="7" width="2.4" height="2" fill="#e6e6e6" stroke="none"/><rect x="10.6" y="7" width="2.4" height="2" fill="#e6e6e6" stroke="none"/></g></svg>
<svg style="left:32.9px;top:243.8px" width="15.04" height="15.04" viewBox="0 0 16 16"><g fill="none" stroke="#e6e6e6" stroke-width="1.2" stroke-linejoin="round" stroke-linecap="round"><rect x="5.6" y="1.8" width="4.8" height="12.4" rx="0.4"/><rect x="7" y="3.2" width="2" height="2.4" fill="#e6e6e6" stroke="none"/><rect x="7" y="6.8" width="2" height="2.4" fill="#e6e6e6" stroke="none"/><rect x="7" y="10.4" width="2" height="2.4" fill="#e6e6e6" stroke="none"/></g></svg>
<svg style="left:11.3px;top:265.6px" width="15.04" height="15.04" viewBox="0 0 16 16"><g fill="none" stroke="#e6e6e6" stroke-width="1.2" stroke-linejoin="round" stroke-linecap="round"><path d="M10.6 1.6 L13.2 4 L6 11.4 L2.8 12.2 L3.4 9 Z M9.2 3 L11.8 5.4"/><path d="M2 14 Q4 11.6 6 13.2 T10.4 12.4 Q12 11.2 14.4 13.6"/></g></svg>
<svg style="left:32.9px;top:265.6px" width="15.04" height="15.04" viewBox="0 0 16 16"><g fill="none" stroke="#e6e6e6" stroke-width="1.2" stroke-linejoin="round" stroke-linecap="round"><circle cx="8" cy="8.8" r="5.6"/><path d="M8 5.8 V9 H10.4"/><path d="M1.8 4 Q2.6 1.8 4.8 1.8 M14.2 4 Q13.4 1.8 11.2 1.8"/></g></svg>
<svg style="left:11.3px;top:287.4px" width="15.04" height="15.04" viewBox="0 0 16 16"><g fill="none" stroke="#e6e6e6" stroke-width="1.2" stroke-linejoin="round" stroke-linecap="round"><path d="M1.5 4.2 V2 H8 V4.2"/><rect x="1.5" y="4.2" width="13" height="10" rx="0.5"/><path d="M3.6 7.4 H10 M3.6 10.6 H8" stroke-width="1.5"/></g></svg>
<svg style="left:32.9px;top:287.4px" width="15.04" height="15.04" viewBox="0 0 16 16"><g fill="none" stroke="#e6e6e6" stroke-width="1.2" stroke-linejoin="round" stroke-linecap="round"><rect x="1.5" y="1.5" width="13" height="13" rx="0.6"/><path d="M5 5.4 H11 M5 8 H11 M5 10.6 H11"/></g></svg>
<svg style="left:11.3px;top:309.2px" width="15.04" height="15.04" viewBox="0 0 16 16"><g fill="none" stroke="#e6e6e6" stroke-width="1.2" stroke-linejoin="round" stroke-linecap="round"><rect x="1.5" y="3.2" width="13" height="9.6" fill="#e6e6e6" stroke="none" opacity=".9"/><rect x="3" y="5.4" width="3" height="5" fill="#545454" stroke="none"/><rect x="7.4" y="5.4" width="3" height="5" fill="#545454" stroke="none"/><path d="M12 5.5 V10.5" stroke="#545454"/></g></svg>
<svg style="left:32.9px;top:309.2px" width="15.04" height="15.04" viewBox="0 0 16 16"><g fill="none" stroke="#e6e6e6" stroke-width="1.2" stroke-linejoin="round" stroke-linecap="round"><path d="M2.5 1.5 V14 H14.5 V10.6 H2.5" stroke-width="1.4"/><path d="M8.6 10.6 V14" stroke-width="1.2"/></g></svg>
<svg style="left:11.3px;top:331.1px" width="15.04" height="15.04" viewBox="0 0 16 16"><g fill="none" stroke="#e6e6e6" stroke-width="1.2" stroke-linejoin="round" stroke-linecap="round"><rect x="1.2" y="2" width="3.6" height="3" fill="#e6e6e6" stroke="none"/><rect x="6.2" y="2" width="3.6" height="3" fill="#e6e6e6" stroke="none"/><rect x="11.2" y="2" width="3.6" height="3" fill="#e6e6e6" stroke="none"/><rect x="1.2" y="6.6" width="3.6" height="3" fill="#e6e6e6" stroke="none"/><rect x="6.2" y="6.6" width="3.6" height="3" fill="#e6e6e6" stroke="none"/><path d="M11.2 8 H14.8 M1.2 12.4 H4.8 M6.2 12.4 H9.8"/></g></svg>
<svg style="left:32.9px;top:331.1px" width="15.04" height="15.04" viewBox="0 0 16 16"><g fill="none" stroke="#e6e6e6" stroke-width="1.2" stroke-linejoin="round" stroke-linecap="round"><path d="M1.5 2 H9 V4.8 H1.5 M3.4 4.8 V12.8 H5.5 M3.4 8 H5.5"/><rect x="5.5" y="6.4" width="9" height="3" rx="0.3"/><rect x="5.5" y="11.2" width="9" height="3" rx="0.3"/></g></svg>
<svg style="left:11.3px;top:352.9px" width="15.04" height="15.04" viewBox="0 0 16 16"><g fill="none" stroke="#e6e6e6" stroke-width="1.2" stroke-linejoin="round" stroke-linecap="round"><path d="M1.5 14 V2.2 H7 L8.2 4.4 H14.5 V14 Z M1.5 4.4 H8"/></g></svg>
<svg style="left:32.9px;top:352.9px" width="15.04" height="15.04" viewBox="0 0 16 16"><g fill="none" stroke="#e6e6e6" stroke-width="1.2" stroke-linejoin="round" stroke-linecap="round"><text x="1" y="9.4" font-family="Liberation Sans,sans-serif" font-size="10" font-weight="bold" fill="#e6e6e6" stroke="none">A</text><path d="M9.4 3.4 H15 M9.4 6.2 H15 M9.4 9 H15 M1 11.8 H15 M1 14.4 H15" stroke-width="1"/></g></svg>
<svg style="left:11.3px;top:374.7px" width="15.04" height="15.04" viewBox="0 0 16 16"><g fill="none" stroke="#e6e6e6" stroke-width="1.2" stroke-linejoin="round" stroke-linecap="round"><path d="M8 1 L13 6 H3 Z" fill="#e6e6e6" stroke="none"/><path d="M8 15 L13 10 H3 Z" fill="#e6e6e6" stroke="none"/><path d="M4 8 H12" stroke-width="1.3" opacity=".75"/></g></svg>
<svg style="left:32.9px;top:374.7px" width="15.04" height="15.04" viewBox="0 0 16 16"><g fill="none" stroke="#e6e6e6" stroke-width="1.2" stroke-linejoin="round" stroke-linecap="round"><rect x="1" y="5.8" width="14" height="4.4" rx="0.4"/><rect x="2.4" y="7.2" width="8.6" height="1.6" fill="#e6e6e6" stroke="none"/></g></svg>
<svg style="left:11.3px;top:396.6px" width="15.04" height="15.04" viewBox="0 0 16 16"><g fill="none" stroke="#e6e6e6" stroke-width="1.2" stroke-linejoin="round" stroke-linecap="round"><path d="M1 8 H15" stroke-width="1.2"/><rect x="3.6" y="5.6" width="2" height="4.8" fill="#e6e6e6" stroke="none"/></g></svg>
<svg style="left:32.9px;top:396.6px" width="15.04" height="15.04" viewBox="0 0 16 16"><g fill="none" stroke="#e6e6e6" stroke-width="1.2" stroke-linejoin="round" stroke-linecap="round"><path d="M9 13.8 H1.5 V3 H13.5 V7 M1.5 5.6 H13.5 M4.4 1.4 V3.6 M10.6 1.4 V3.6"/><circle cx="11.4" cy="11" r="3.6"/><path d="M11.4 9 V11.2 H13"/></g></svg>
<svg style="left:11.3px;top:418.4px" width="15.04" height="15.04" viewBox="0 0 16 16"><g fill="none" stroke="#e6e6e6" stroke-width="1.2" stroke-linejoin="round" stroke-linecap="round"><rect x="1.2" y="2.4" width="13.6" height="12" rx="0.8"/><path d="M1.2 5.6 H14.8 M4.4 1 V3.4 M11.6 1 V3.4"/><rect x="3.6" y="7.6" width="2.2" height="2" fill="#e6e6e6" stroke="none"/><rect x="6.9" y="7.6" width="2.2" height="2" fill="#e6e6e6" stroke="none"/><rect x="10.2" y="7.6" width="2.2" height="2" fill="#e6e6e6" stroke="none"/><rect x="3.6" y="10.8" width="2.2" height="2" fill="#e6e6e6" stroke="none"/><rect x="6.9" y="10.8" width="2.2" height="2" fill="#e6e6e6" stroke="none"/></g></svg>
<svg style="left:32.9px;top:418.4px" width="15.04" height="15.04" viewBox="0 0 16 16"><g fill="none" stroke="#e6e6e6" stroke-width="1.2" stroke-linejoin="round" stroke-linecap="round"><rect x="1" y="4.4" width="14" height="7.4" rx="0.6"/><path d="M4.4 2.6 V13.6 M2.6 13.6 H6.4 M2.8 2.6 H6"/><path d="M9 9.6 H13"/></g></svg>
<svg style="left:11.3px;top:440.2px" width="15.04" height="15.04" viewBox="0 0 16 16"><g fill="none" stroke="#e6e6e6" stroke-width="1.2" stroke-linejoin="round" stroke-linecap="round"><path d="M12.6 8.6 H5 Q5.2 11.4 8 11.4 Q9.8 11.4 10.6 10.2 H13.2 Q12 13.8 8 13.8 Q2.8 13.8 2.8 8.4 Q2.8 3.4 8 3.4 Q13.4 3.4 13.2 8.6 Z M5.2 6.9 H10.6 Q10.2 5.2 8 5.2 Q5.8 5.2 5.2 6.9 Z" fill="#e6e6e6" stroke="none" fill-rule="evenodd"/><path d="M2 13.6 Q0.6 10.8 4.6 6.4 Q9 2 13.6 1.6 Q15.6 2 13.6 5" stroke-width="1.3"/></g></svg>
<svg style="left:32.9px;top:440.2px" width="15.04" height="15.04" viewBox="0 0 16 16"><g fill="none" stroke="#e6e6e6" stroke-width="1.2" stroke-linejoin="round" stroke-linecap="round"><circle cx="8" cy="8" r="6.7" fill="#e6e6e6" stroke="none"/><circle cx="8" cy="8" r="2.5" fill="#545454" stroke="none"/><circle cx="8" cy="8" r="1.5" fill="#e6e6e6" stroke="none"/><path d="M8 5.4 H14 M5.8 9.3 L2.7 4 M10.2 9.3 L7.2 14.6" stroke="#545454" stroke-width="1.2"/></g></svg>
<svg style="left:11.3px;top:462.1px" width="15.04" height="15.04" viewBox="0 0 16 16"><g fill="none" stroke="#e6e6e6" stroke-width="1.2" stroke-linejoin="round" stroke-linecap="round"><circle cx="8" cy="8" r="4.8"/><path d="M3.6 10.4 Q-0.6 14.6 1.8 15 Q5 15 10.4 10.2 Q15.6 5 14.6 1.6 Q13.4 0.2 10.6 3.2"/></g></svg>
<svg style="left:32.9px;top:462.1px" width="15.04" height="15.04" viewBox="0 0 16 16"><g fill="none" stroke="#e6e6e6" stroke-width="1.2" stroke-linejoin="round" stroke-linecap="round"><path d="M4 1.6 H12 M2.6 3.8 H13.4"/><rect x="1.2" y="6" width="13.6" height="8.6" rx="0.5"/><path d="M3.4 12.6 L6.2 9.4 L8.2 11.4 L10 10 L12.6 12.6 Z" fill="#e6e6e6" stroke="none"/><circle cx="10.6" cy="8.2" r="0.8" fill="#e6e6e6" stroke="none"/></g></svg>
<svg style="left:11.3px;top:483.9px" width="15.04" height="15.04" viewBox="0 0 16 16"><g fill="none" stroke="#e6e6e6" stroke-width="1.2" stroke-linejoin="round" stroke-linecap="round"><ellipse cx="6.4" cy="3.2" rx="5.2" ry="2.2" fill="#e6e6e6" stroke="none"/><path d="M1.2 5 Q6.4 8.4 11.6 5 V7 Q9 8.2 8.4 9 Q5 9.6 1.2 7.4 Z M1.2 8.8 Q5 11.4 8 10.6 V13 Q5 13.8 1.2 11.6 Z M1.2 13 Q5 15.6 8.2 14.6 L8.6 15.4 Q5 16.6 1.2 14.4 Z" fill="#e6e6e6" stroke="none"/><path d="M9.2 8.4 H15.4 L14.4 13.8 Q12.4 15 10.2 13.8 Z" fill="#e6e6e6" stroke="none"/></g></svg>
<svg style="left:32.9px;top:483.9px" width="15.04" height="15.04" viewBox="0 0 16 16"><g fill="none" stroke="#e6e6e6" stroke-width="1.2" stroke-linejoin="round" stroke-linecap="round"><rect x="1.8" y="1.5" width="12.4" height="13" rx="0.5"/><rect x="7.1" y="4" width="1.8" height="4.6" fill="#e6e6e6" stroke="none"/><rect x="7.1" y="10" width="1.8" height="1.9" fill="#e6e6e6" stroke="none"/></g></svg>
<svg style="left:11.3px;top:505.7px" width="15.04" height="15.04" viewBox="0 0 16 16"><g fill="none" stroke="#e6e6e6" stroke-width="1.2" stroke-linejoin="round" stroke-linecap="round"><path d="M2.2 4.4 Q4.4 1.4 8 1.4 Q11.6 1.4 13.8 4.4 M2.2 11.6 Q4.4 14.6 8 14.6 Q11.6 14.6 13.8 11.6" stroke-width="1"/><text x="8" y="10.4" font-family="Liberation Sans,sans-serif" font-size="6.6" font-weight="bold" text-anchor="middle" fill="#e6e6e6" stroke="none">ICO</text></g></svg>
<svg style="left:32.9px;top:505.7px" width="15.04" height="15.04" viewBox="0 0 16 16"><g fill="none" stroke="#e6e6e6" stroke-width="1.2" stroke-linejoin="round" stroke-linecap="round"><circle cx="8" cy="3.2" r="2"/><path d="M8 5.2 V14.2 M4.6 7.6 H11.4 M1.6 9.6 Q2.4 14.2 8 14.4 Q13.6 14.2 14.4 9.6" stroke-width="1.5"/><path d="M0.6 10.8 L1.6 8.4 L3.6 10.4 Z M15.4 10.8 L14.4 8.4 L12.4 10.4 Z" fill="#e6e6e6" stroke="none"/></g></svg>

<!-- ===== design area ===== -->
<style>
.frm{font-family:"Liberation Mono","Noto Sans CJK SC",monospace;font-size:10.1px;color:#0c0c0c;font-weight:400}
.frm .t{color:#111}
.btn{border:1px solid #8e8e8e;border-radius:3px;background:linear-gradient(180deg,#f4f4f4 0,#ececec 48%,#dedede 52%,#d2d2d2 100%);box-shadow:inset 0 0 0 1px rgba(255,255,255,.75);text-align:center;white-space:nowrap;color:#111}
.btn span{position:static !important}
.lat{position:static !important;letter-spacing:-1px}
.hd{width:5.5px;height:5.5px;background:#cfcfcf}
.hc{width:6px;height:6px;background:#3fd3d6}
.sb{background:#efefef}
.thumb{border:1px solid #9a9a9a;border-radius:2px;background:linear-gradient(90deg,#f6f6f6,#e3e3e3 50%,#cfcfcf)}
.thumbh{border:1px solid #9a9a9a;border-radius:2px;background:linear-gradient(180deg,#f6f6f6,#e3e3e3 50%,#cfcfcf)}
.cn{font-family:"Liberation Sans","Noto Sans CJK SC",sans-serif;font-size:10.6px;letter-spacing:0;color:#222}
</style>
<div style="left:54px;top:107px;width:688px;height:419.5px;background:#262626"></div>
<svg style="left:54px;top:107px" width="688" height="420" viewBox="0 0 688 420"><rect x="0.7" y="0.7" width="686.6" height="418.4" fill="none" stroke="#f4f4f4" stroke-width="1.2" stroke-dasharray="2.6 2.2"/></svg>
<div class="sb" style="left:54px;top:527px;width:687.5px;height:15px;"></div>
<div class="sb" style="left:743px;top:107px;width:15px;height:435px;"></div>
<div style="left:741.5px;top:527px;width:1.5px;height:15px;background:#555"></div>
<div class="thumb" style="left:744.5px;top:122px;width:12px;height:66px;"></div>
<svg style="left:747.5px;top:151px" width="6" height="7" viewBox="0 0 6 7"><path d="M0 0.5 H6 M0 2.5 H6 M0 4.5 H6 M0 6.5 H6" stroke="#555" stroke-width="0.8"/></svg>
<svg style="left:747px;top:112.5px" width="7" height="4" viewBox="0 0 7 4"><path d="M0 4 L3.5 0 L7 4 Z" fill="#444"/></svg>
<svg style="left:747px;top:533.5px" width="7" height="4" viewBox="0 0 7 4"><path d="M0 0 L3.5 4 L7 0 Z" fill="#444"/></svg>
<div class="thumbh" style="left:69.5px;top:528.5px;width:107px;height:12px;"></div>
<svg style="left:119.5px;top:531.5px" width="7" height="6" viewBox="0 0 7 6"><path d="M0.5 0 V6 M2.5 0 V6 M4.5 0 V6 M6.5 0 V6" stroke="#555" stroke-width="0.8"/></svg>
<svg style="left:59px;top:531px" width="4" height="7" viewBox="0 0 4 7"><path d="M4 0 L0 3.5 L4 7 Z" fill="#444"/></svg>
<svg style="left:733px;top:531px" width="4" height="7" viewBox="0 0 4 7"><path d="M0 0 L4 3.5 L0 7 Z" fill="#444"/></svg>
<div style="left:64px;top:117px;width:532.5px;height:377px;border-radius:6px 6px 1px 1px;background:linear-gradient(180deg,#a3bed9 0,#adc6e2 10px,#b5caea 23px,#b8cdec 25px,#b9d3ee 32px,#b9d3ee 100%);box-shadow:0 0 0 1px #16222e, inset 0 0 0 1px rgba(255,255,255,.7)"></div>
<div style="left:65px;top:118px;width:406px;height:24px;border-radius:5px 0 0 0;background:radial-gradient(ellipse 380px 36px at 30px -4px,rgba(255,255,255,.8) 0,rgba(255,255,255,.5) 45%,rgba(255,255,255,0) 100%),linear-gradient(90deg,rgba(255,255,255,.25) 0,rgba(255,255,255,0) 400px)"></div>
<div style="left:70.5px;top:141px;width:519.5px;height:1.5px;background:#f4fbff"></div>
<svg style="left:73px;top:125px" width="13" height="13" viewBox="0 0 13 13"><path d="M1 6.4 L6 1 L11 6.4" fill="none" stroke="#d8782a" stroke-width="1.8"/><rect x="2.4" y="6" width="7.4" height="5.6" fill="#fdfdfd" stroke="#8a8a8a" stroke-width="0.7"/><rect x="5" y="7.5" width="2.2" height="4" fill="#5a8fd0"/><path d="M9.5 8 V12.5 H13" stroke="#3257c8" stroke-width="1.6" fill="none"/><path d="M2 9 V12.5" stroke="#3a9a3a" stroke-width="1.4"/></svg>
<span class="t" style="left:88.5px;top:126.5px;font-family:'Liberation Sans',sans-serif;font-size:11px;color:#1a1a1a">Form1</span>
<div style="left:507px;top:124px;width:25px;height:15px;border:1px solid #7c93ad;border-radius:3px;background:linear-gradient(180deg,#dbe7f5 0,#c4d6ea 45%,#a9c1dc 50%,#bdd2e8 100%);box-shadow:inset 0 0 0 1px rgba(255,255,255,.6)"></div>
<div style="left:534.5px;top:124px;width:25.5px;height:15px;border:1px solid #7c93ad;border-radius:3px;background:linear-gradient(180deg,#dbe7f5 0,#c4d6ea 45%,#a9c1dc 50%,#bdd2e8 100%);box-shadow:inset 0 0 0 1px rgba(255,255,255,.6)"></div>
<div style="left:562px;top:124px;width:26px;height:15px;border:1px solid #7a3a32;border-radius:3px;background:linear-gradient(180deg,#e8a394 0,#d9705c 45%,#c9402c 50%,#d8694f 100%);box-shadow:inset 0 0 0 1px rgba(255,255,255,.4)"></div>
<div style="left:515px;top:133px;width:9px;height:3px;background:#fff;border:1px solid #4b5d72;border-radius:1px"></div>
<div style="left:543px;top:128px;width:8.5px;height:6.5px;background:#fff;border:1px solid #4b5d72;border-radius:1px"></div>
<div style="left:545.5px;top:130px;width:3.5px;height:2.5px;background:#9eb6d2;border:0.8px solid #4b5d72"></div>
<svg style="left:570.5px;top:127.5px" width="9" height="8" viewBox="0 0 9 8"><path d="M1 0.8 L8 7.2 M8 0.8 L1 7.2" stroke="#5a2a22" stroke-width="3" stroke-linecap="round"/><path d="M1 0.8 L8 7.2 M8 0.8 L1 7.2" stroke="#fff" stroke-width="1.7" stroke-linecap="round"/></svg>
<div style="left:70.5px;top:142.5px;width:519.5px;height:14.5px;background:linear-gradient(180deg,#fafbfd 0,#eef1f8 40%,#dfe4f0 100%);border-bottom:1px solid #f8f8f8;box-shadow:0 -1px 0 #8a9db3"></div>
<div style="left:70.5px;top:157px;width:519.5px;height:331.5px;background:#f0f0f0"></div>
<div class="frm" style="left:0;top:0;width:0;height:0">
<span class="t" style="left:74.5px;top:147px;">菜单</span>
<span class="t" style="left:88.7px;top:167px;">不需要<span class="lat">DOS</span>窗口（调试输出用）在工程属性里设置</span>
<div style="left:83.5px;top:185.5px;width:97.5px;height:111px;background:#fff;border:1px solid #8f8f8f"></div>
<span class="t" style="left:86px;top:187.5px;"><span class="lat">List1</span></span>
<div class="btn" style="left:192px;top:186px;width:82.5px;height:23.5px;line-height:24.1px">窗口更名</div>
<div class="btn" style="left:192px;top:219px;width:76px;height:24px;line-height:24.6px">全局变量</div>
<div class="btn" style="left:192px;top:253px;width:70px;height:24px;line-height:24.6px">弹出菜单</div>
<div class="btn" style="left:434px;top:172.5px;width:84.5px;height:20.5px;line-height:21.1px">写代码随窗口</div>
<span class="t" style="left:297.5px;top:206.5px;">这是自绘<span class="lat">List</span></span>
<div style="left:288px;top:218.5px;width:252.5px;height:90px;background:#fff;border:1px solid #8f8f8f"></div>
<span class="t" style="left:291px;top:220.5px;"><span class="lat">List2</span></span>
<div class="btn" style="left:98px;top:300px;width:61.5px;height:18.5px;line-height:19.1px">加载<span class="lat">List</span></div>
<div class="btn" style="left:166px;top:300px;width:80.5px;height:18px;line-height:18.6px">改变<span class="lat">list</span> 行间距</div>
<div class="btn" style="left:97px;top:328.5px;width:98.5px;height:21px;line-height:21.6px">显示窗口<span class="lat">2</span>（普通）</div>
<div class="btn" style="left:129.8px;top:381px;width:99px;height:21px;line-height:21.6px">显示窗口<span class="lat">2</span>（模态）</div>
</div>
<svg style="left:261px;top:356px" width="139" height="61" viewBox="0 0 139 61"><rect x="0.5" y="0.5" width="138" height="60" fill="none" stroke="#222" stroke-width="1" stroke-dasharray="4 2 1.5 2"/></svg>
<svg style="left:265px;top:358.5px" width="15" height="13" viewBox="0 0 16 16"><g fill="none" stroke="#1a1a1a" stroke-width="1.5" stroke-linejoin="round" stroke-linecap="round"><path d="M10.6 1.6 L13.2 4 L6 11.4 L2.8 12.2 L3.4 9 Z M9.2 3 L11.8 5.4"/><path d="M2 14 Q4 11.6 6 13.2 T10.4 12.4 Q12 11.2 14.4 13.6"/></g></svg>
<span class="t" style="left:280.5px;top:360.5px;font-family:'Liberation Sans',sans-serif;font-size:10.6px;color:#1a1a1a">Picture1</span>
<div style="left:432px;top:361px;width:85px;height:69.5px;border:1px solid #4a4a4a;border-radius:17px"></div>
<div style="left:96px;top:423.5px;width:27px;height:24px;border:1.2px solid #222;background:#f4f6f8"></div>
<svg style="left:100px;top:426px" width="19" height="19" viewBox="0 0 16 16"><g fill="none" stroke="#1a1a1a" stroke-width="1.3" stroke-linejoin="round" stroke-linecap="round"><circle cx="8" cy="8.8" r="5.6"/><path d="M8 5.8 V9 H10.4"/><path d="M1.8 4 Q2.6 1.8 4.8 1.8 M14.2 4 Q13.4 1.8 11.2 1.8"/></g></svg>
<span class="t" style="left:69.7px;top:450px;width:80px;text-align:center;font-family:'Liberation Sans',sans-serif;font-size:10.6px;color:#1a1a1a">Timer1</span>
<div style="left:163px;top:426px;width:27px;height:24px;border:1.2px solid #222;background:#f4f6f8"></div>
<svg style="left:167px;top:428.5px" width="19" height="19" viewBox="0 0 16 16"><g fill="none" stroke="#1a1a1a" stroke-width="1.3" stroke-linejoin="round" stroke-linecap="round"><path d="M2.2 4.4 Q4.4 1.4 8 1.4 Q11.6 1.4 13.8 4.4 M2.2 11.6 Q4.4 14.6 8 14.6 Q11.6 14.6 13.8 11.6" stroke-width="0.9"/><text x="8" y="10.4" font-family="Liberation Sans,sans-serif" font-size="6.8" font-weight="bold" text-anchor="middle" fill="#1a1a1a" stroke="none">ICO</text></g></svg>
<span class="t" style="left:136.7px;top:452.5px;width:80px;text-align:center;font-family:'Liberation Sans',sans-serif;font-size:10.6px;color:#1a1a1a">TrayIco1</span>
<div style="left:239px;top:432px;width:27px;height:24px;border:1.2px solid #222;background:#f4f6f8"></div>
<svg style="left:243px;top:434.5px" width="19" height="19" viewBox="0 0 16 16"><g fill="none" stroke="#1a1a1a" stroke-width="1.3" stroke-linejoin="round" stroke-linecap="round"><rect x="2" y="2" width="12" height="12" rx="0.6"/><path d="M5 5.4 H11 M5 8 H11 M5 10.6 H11"/></g></svg>
<span class="t" style="left:212.3px;top:458.2px;width:80px;text-align:center;font-family:'Liberation Sans',sans-serif;font-size:10.6px;color:#1a1a1a">PopupMenu1</span>
<div style="left:70.5px;top:470px;width:519.5px;height:18.5px;background:#f3f0ef;border-top:1px solid #b4b4b4;box-shadow:inset 0 1px 0 #fff, inset 0 -1px 0 #fff"></div>
<svg style="left:579px;top:478px" width="10" height="10" viewBox="0 0 10 10"><g fill="#b0b0b0"><rect x="7" y="1" width="2" height="2"/><rect x="4" y="4" width="2" height="2"/><rect x="7" y="4" width="2" height="2"/><rect x="1" y="7" width="2" height="2"/><rect x="4" y="7" width="2" height="2"/><rect x="7" y="7" width="2" height="2"/></g></svg>
<div class="hd" style="left:57.25px;top:109.25px"></div>
<div class="hd" style="left:327.25px;top:109.25px"></div>
<div class="hd" style="left:597.25px;top:109.25px"></div>
<div class="hd" style="left:57.25px;top:302.75px"></div>
<div class="hd" style="left:57.25px;top:495.75px"></div>
<div class="hc" style="left:597px;top:303px"></div>
<div class="hc" style="left:327.5px;top:495.5px"></div>
<div class="hc" style="left:597px;top:495.5px"></div>

<!-- ===== right panel ===== -->
<style>
.pg{font-size:10.5px;color:#ececec}
.pg .n{left:1.8px}
.pg .v{left:53px}
.pv{font-weight:bold;color:#751026}
</style>
<div style="left:758px;top:46px;width:5px;height:613px;background:#4e4e4e"></div>
<div style="left:763px;top:46px;width:214px;height:19px;background:#4d4d4d"></div>
<div style="left:763px;top:64px;width:214px;height:5px;background:#4a4a4a"></div>
<div class="tab " style="left:766px;top:48px;width:39px;height:16px;line-height:16.2px;padding-left:13px">库</div>
<div class="tab " style="left:806px;top:48px;width:48px;height:16px;line-height:16.2px;padding-left:13px">工程</div>
<div class="tab on" style="left:855.5px;top:48px;width:49.5px;height:16px;line-height:16.2px;padding-left:13px">属性</div>
<div class="tab " style="left:906px;top:48px;width:40px;height:16px;line-height:16.2px;padding-left:13px">层</div>
<svg style="left:771px;top:50.5px" width="11" height="12" viewBox="0 0 11 12"><path d="M5.5 0.8 L10.2 3.2 V8.6 L5.5 11.2 L0.8 8.6 V3.2 Z M0.8 3.2 L5.5 5.8 L10.2 3.2 M5.5 5.8 V11.2" fill="none" stroke="#e8e8e8" stroke-width="1" stroke-linejoin="round"/></svg>
<svg style="left:812.5px;top:50.5px" width="11" height="12" viewBox="0 0 11 12"><g fill="none" stroke="#e8e8e8" stroke-width="1.1"><circle cx="2.8" cy="3" r="2.1"/><circle cx="8.2" cy="3" r="2.1"/><circle cx="2.8" cy="9" r="2.1"/><circle cx="8.2" cy="9" r="2.1"/></g></svg>
<svg style="left:862px;top:51px" width="11" height="11" viewBox="0 0 11 11"><g fill="none" stroke="#17352a" stroke-width="1.1"><rect x="0.6" y="0.6" width="9.8" height="9.8"/><path d="M0.6 3.9 H10.4 M0.6 7.2 H10.4"/></g></svg>
<svg style="left:912px;top:50.5px" width="12" height="12" viewBox="0 0 12 12"><g fill="none" stroke="#e8e8e8" stroke-width="1.1"><rect x="0.6" y="0.6" width="4.4" height="4.4"/><rect x="6.6" y="6.6" width="4.8" height="4.8" rx="0.8"/><path d="M5 2.8 H8.8 V6.6"/></g></svg>
<div style="left:763px;top:65px;width:214px;height:594px;background:#585858"></div>
<div style="left:763px;top:65px;width:209.5px;height:589.5px;background:#535353;box-shadow:inset 0 0 0 1px #494949"></div>
<div style="left:766.5px;top:69px;width:203px;height:20px;background:#fff;border-radius:1px"></div>
<svg style="left:771px;top:74px" width="12" height="11" viewBox="0 0 12 11"><rect x="0.6" y="0.6" width="10.8" height="9.8" rx="0.6" fill="none" stroke="#222" stroke-width="1.1"/><path d="M0.6 3.3 H11.4" stroke="#222" stroke-width="1.2"/></svg>
<span class="t" style="left:787px;top:73.5px;font-size:11px;font-weight:bold;color:#1f5f86;letter-spacing:-0.2px">Form1</span>
<span class="t" style="left:827.5px;top:73.8px;font-size:10.6px;color:#b9b9b9">Form</span>
<svg style="left:958px;top:77.5px" width="7" height="4" viewBox="0 0 7 4"><path d="M0 0 L3.5 4 L7 0 Z" fill="#111"/></svg>
<div class="pg" style="left:763.5px;top:91.7px;width:195.5px;height:504px">
<div style="left:0;top:0.00px;width:195.5px;height:16.8px;border-bottom:1px solid #474747">
<span class="t n" style="top:4px">名称</span>
<span class="t v" style="top:4px">Form1</span>
</div>
<div style="left:0;top:16.80px;width:195.5px;height:16.8px;border-bottom:1px solid #474747">
<span class="t n" style="top:4px">类样式</span>
<span class="t v" style="top:4px;left:55.5px">....</span>
</div>
<div style="left:0;top:33.60px;width:195.5px;height:16.8px;border-bottom:1px solid #474747">
<span class="t n" style="top:4px">类名称</span>
<span class="t v" style="top:4px">vfb5_Form1</span>
</div>
<div style="left:0;top:50.40px;width:195.5px;height:16.8px;border-bottom:1px solid #474747">
<span class="t n" style="top:4px">窗口样式</span>
<span class="t v" style="top:4px;left:55.5px">....</span>
</div>
<div style="left:0;top:67.20px;width:195.5px;height:16.8px;border-bottom:1px solid #474747">
<span class="t n" style="top:4px">外观</span>
<span class="t v" style="top:4px">3 - 常规窗口</span>
</div>
<div style="left:0;top:84.00px;width:195.5px;height:16.8px;border-bottom:1px solid #474747">
<span class="t n" style="top:4px">图标</span>
<span class="t v" style="top:4px;left:55.5px">....</span>
</div>
<div style="left:0;top:100.80px;width:195.5px;height:16.8px;border-bottom:1px solid #474747">
<span class="t n" style="top:4px">标题</span>
<span class="t v" style="top:4px">Form1</span>
</div>
<div style="left:0;top:117.60px;width:195.5px;height:16.8px;border-bottom:1px solid #474747">
<span class="t n" style="top:4px">启动位置</span>
<span class="t v" style="top:4px">1 - 屏幕中心</span>
</div>
<div style="left:0;top:134.40px;width:195.5px;height:16.8px;border-bottom:1px solid #474747">
<span class="t n" style="top:4px">可见状态</span>
<span class="t v" style="top:4px">0 - 正常</span>
</div>
<div style="left:0;top:151.20px;width:195.5px;height:16.8px;border-bottom:1px solid #474747">
<span class="t n" style="top:4px">可用</span>
<svg style="left:55px;top:3.4px" width="12" height="12" viewBox="0 0 12 12"><rect x="0.6" y="0.6" width="10.8" height="10.8" rx="1" fill="rgba(125,45,45,.22)" stroke="#7e3333" stroke-width="1.1"/><path d="M2.8 6 L5 8.4 L9.4 3.4" fill="none" stroke="#7e3333" stroke-width="1.1"/></svg>
<span class="t" style="left:74px;top:4px">True</span>
</div>
<div style="left:0;top:168.00px;width:195.5px;height:16.8px;border-bottom:1px solid #474747">
<span class="t n" style="top:4px">多开</span>
<svg style="left:55px;top:3.4px" width="12" height="12" viewBox="0 0 12 12"><rect x="0.6" y="0.6" width="10.8" height="10.8" rx="1.2" fill="none" stroke="#e4e4e4" stroke-width="1.1" stroke-dasharray="2.7 1.62" stroke-dashoffset="1.35"/></svg>
<span class="t" style="left:74px;top:4px">False</span>
</div>
<div style="left:0;top:184.80px;width:195.5px;height:16.8px;border-bottom:1px solid #474747">
<span class="t n" style="top:4px">位置X</span>
<span class="t v pv" style="top:4px;left:52px">0</span>
</div>
<div style="left:0;top:201.60px;width:195.5px;height:16.8px;border-bottom:1px solid #474747">
<span class="t n" style="top:4px">位置Y</span>
<span class="t v pv" style="top:4px;left:52px">0</span>
</div>
<div style="left:0;top:218.40px;width:195.5px;height:16.8px;border-bottom:1px solid #474747">
<span class="t n" style="top:4px">宽度</span>
<span class="t v pv" style="top:4px;left:52px">634</span>
</div>
<div style="left:0;top:235.20px;width:195.5px;height:16.8px;border-bottom:1px solid #474747">
<span class="t n" style="top:4px">高度</span>
<span class="t v pv" style="top:4px;left:52px">451</span>
</div>
<div style="left:0;top:252.00px;width:195.5px;height:16.8px;border-bottom:1px solid #474747">
<span class="t n" style="top:4px">顶层窗口</span>
<svg style="left:55px;top:3.4px" width="12" height="12" viewBox="0 0 12 12"><rect x="0.6" y="0.6" width="10.8" height="10.8" rx="1.2" fill="none" stroke="#e4e4e4" stroke-width="1.1" stroke-dasharray="2.7 1.62" stroke-dashoffset="1.35"/></svg>
<span class="t" style="left:74px;top:4px">False</span>
</div>
<div style="left:0;top:268.80px;width:195.5px;height:16.8px;border-bottom:1px solid #474747">
<span class="t n" style="top:4px">子窗口</span>
<svg style="left:55px;top:3.4px" width="12" height="12" viewBox="0 0 12 12"><rect x="0.6" y="0.6" width="10.8" height="10.8" rx="1.2" fill="none" stroke="#e4e4e4" stroke-width="1.1" stroke-dasharray="2.7 1.62" stroke-dashoffset="1.35"/></svg>
<span class="t" style="left:74px;top:4px">False</span>
</div>
<div style="left:0;top:285.60px;width:195.5px;height:16.8px;border-bottom:1px solid #474747">
<span class="t n" style="top:4px">MDI子窗</span>
<svg style="left:55px;top:3.4px" width="12" height="12" viewBox="0 0 12 12"><rect x="0.6" y="0.6" width="10.8" height="10.8" rx="1.2" fill="none" stroke="#e4e4e4" stroke-width="1.1" stroke-dasharray="2.7 1.62" stroke-dashoffset="1.35"/></svg>
<span class="t" style="left:74px;top:4px">False</span>
</div>
<div style="left:0;top:302.40px;width:195.5px;height:16.8px;border-bottom:1px solid #474747">
<span class="t n" style="top:4px">标题栏</span>
<svg style="left:55px;top:3.4px" width="12" height="12" viewBox="0 0 12 12"><rect x="0.6" y="0.6" width="10.8" height="10.8" rx="1" fill="rgba(125,45,45,.22)" stroke="#7e3333" stroke-width="1.1"/><path d="M2.8 6 L5 8.4 L9.4 3.4" fill="none" stroke="#7e3333" stroke-width="1.1"/></svg>
<span class="t" style="left:74px;top:4px">True</span>
</div>
<div style="left:0;top:319.20px;width:195.5px;height:16.8px;border-bottom:1px solid #474747">
<span class="t n" style="top:4px">尺寸边框</span>
<svg style="left:55px;top:3.4px" width="12" height="12" viewBox="0 0 12 12"><rect x="0.6" y="0.6" width="10.8" height="10.8" rx="1" fill="rgba(125,45,45,.22)" stroke="#7e3333" stroke-width="1.1"/><path d="M2.8 6 L5 8.4 L9.4 3.4" fill="none" stroke="#7e3333" stroke-width="1.1"/></svg>
<span class="t" style="left:74px;top:4px">True</span>
</div>
<div style="left:0;top:336.00px;width:195.5px;height:16.8px;border-bottom:1px solid #474747">
<span class="t n" style="top:4px">系统菜单</span>
<svg style="left:55px;top:3.4px" width="12" height="12" viewBox="0 0 12 12"><rect x="0.6" y="0.6" width="10.8" height="10.8" rx="1" fill="rgba(125,45,45,.22)" stroke="#7e3333" stroke-width="1.1"/><path d="M2.8 6 L5 8.4 L9.4 3.4" fill="none" stroke="#7e3333" stroke-width="1.1"/></svg>
<span class="t" style="left:74px;top:4px">True</span>
</div>
<div style="left:0;top:352.80px;width:195.5px;height:16.8px;border-bottom:1px solid #474747">
<span class="t n" style="top:4px">最大按钮</span>
<svg style="left:55px;top:3.4px" width="12" height="12" viewBox="0 0 12 12"><rect x="0.6" y="0.6" width="10.8" height="10.8" rx="1" fill="rgba(125,45,45,.22)" stroke="#7e3333" stroke-width="1.1"/><path d="M2.8 6 L5 8.4 L9.4 3.4" fill="none" stroke="#7e3333" stroke-width="1.1"/></svg>
<span class="t" style="left:74px;top:4px">True</span>
</div>
<div style="left:0;top:369.60px;width:195.5px;height:16.8px;border-bottom:1px solid #474747">
<span class="t n" style="top:4px">最小按钮</span>
<svg style="left:55px;top:3.4px" width="12" height="12" viewBox="0 0 12 12"><rect x="0.6" y="0.6" width="10.8" height="10.8" rx="1" fill="rgba(125,45,45,.22)" stroke="#7e3333" stroke-width="1.1"/><path d="M2.8 6 L5 8.4 L9.4 3.4" fill="none" stroke="#7e3333" stroke-width="1.1"/></svg>
<span class="t" style="left:74px;top:4px">True</span>
</div>
<div style="left:0;top:386.40px;width:195.5px;height:16.8px;border-bottom:1px solid #474747">
<span class="t n" style="top:4px">帮助按钮</span>
<svg style="left:55px;top:3.4px" width="12" height="12" viewBox="0 0 12 12"><rect x="0.6" y="0.6" width="10.8" height="10.8" rx="1.2" fill="none" stroke="#e4e4e4" stroke-width="1.1" stroke-dasharray="2.7 1.62" stroke-dashoffset="1.35"/></svg>
<span class="t" style="left:74px;top:4px">False</span>
</div>
<div style="left:0;top:403.20px;width:195.5px;height:16.8px;border-bottom:1px solid #474747">
<span class="t n" style="top:4px">滚动条H</span>
<svg style="left:55px;top:3.4px" width="12" height="12" viewBox="0 0 12 12"><rect x="0.6" y="0.6" width="10.8" height="10.8" rx="1.2" fill="none" stroke="#e4e4e4" stroke-width="1.1" stroke-dasharray="2.7 1.62" stroke-dashoffset="1.35"/></svg>
<span class="t" style="left:74px;top:4px">False</span>
</div>
<div style="left:0;top:420.00px;width:195.5px;height:16.8px;border-bottom:1px solid #474747">
<span class="t n" style="top:4px">滚动条V</span>
<svg style="left:55px;top:3.4px" width="12" height="12" viewBox="0 0 12 12"><rect x="0.6" y="0.6" width="10.8" height="10.8" rx="1.2" fill="none" stroke="#e4e4e4" stroke-width="1.1" stroke-dasharray="2.7 1.62" stroke-dashoffset="1.35"/></svg>
<span class="t" style="left:74px;top:4px">False</span>
</div>
<div style="left:0;top:436.80px;width:195.5px;height:16.8px;border-bottom:1px solid #474747">
<span class="t n" style="top:4px">最小宽度</span>
<span class="t v pv" style="top:4px;left:52px">300</span>
</div>
<div style="left:0;top:453.60px;width:195.5px;height:16.8px;border-bottom:1px solid #474747">
<span class="t n" style="top:4px">最小高度</span>
<span class="t v pv" style="top:4px;left:52px">300</span>
</div>
<div style="left:0;top:470.40px;width:195.5px;height:16.8px;border-bottom:1px solid #474747">
<span class="t n" style="top:4px">最大宽度</span>
<span class="t v pv" style="top:4px;left:52px">0</span>
</div>
<div style="left:0;top:487.20px;width:195.5px;height:16.8px;border-bottom:0px solid #474747">
<span class="t n" style="top:4px">最大高度</span>
<span class="t v pv" style="top:4px;left:52px">0</span>
</div>
<div style="left:49.5px;top:0;width:1px;height:504px;background:#474747"></div>
</div>
<div class="sb" style="left:959px;top:91px;width:13px;height:502px;"></div>
<div class="thumb" style="left:960px;top:107px;width:11px;height:324px;"></div>
<svg style="left:962.5px;top:266px" width="6" height="7" viewBox="0 0 6 7"><path d="M0 0.5 H6 M0 2.5 H6 M0 4.5 H6 M0 6.5 H6" stroke="#555" stroke-width="0.8"/></svg>
<svg style="left:962px;top:97px" width="7" height="4" viewBox="0 0 7 4"><path d="M0 4 L3.5 0 L7 4 Z" fill="#333"/></svg>
<svg style="left:962px;top:585px" width="7" height="4" viewBox="0 0 7 4"><path d="M0 0 L3.5 4 L7 0 Z" fill="#333"/></svg>

<!-- ===== bottom panel ===== -->
<div style="left:0px;top:542px;width:758px;height:21px;background:#4e4e4e"></div>
<div style="left:0px;top:562.5px;width:758px;height:1px;background:#464646"></div>
<div style="left:0px;top:563.5px;width:758px;height:95.5px;background:#535353"></div>
<div class="tab on" style="left:4px;top:546px;width:50px;height:17px;line-height:16.5px;padding-left:11px;border-radius:5px 5px 0 0">帮助</div>
<div class="tab " style="left:55px;top:546px;width:49px;height:17px;line-height:16.5px;padding-left:11px;border-radius:5px 5px 0 0">编译</div>
<div class="tab " style="left:105px;top:546px;width:48.5px;height:17px;line-height:16.5px;padding-left:11px;border-radius:5px 5px 0 0">调试</div>
<div class="tab " style="left:154.5px;top:546px;width:48.5px;height:17px;line-height:16.5px;padding-left:11px;border-radius:5px 5px 0 0">立即</div>
<div class="tab " style="left:204px;top:546px;width:49px;height:17px;line-height:16.5px;padding-left:11px;border-radius:5px 5px 0 0">笔记</div>
<div class="tab " style="left:254px;top:546px;width:48px;height:17px;line-height:16.5px;padding-left:11px;border-radius:5px 5px 0 0">书签</div>
<svg style="left:10.5px;top:548.5px" width="12" height="12" viewBox="0 0 12 12"><g fill="none" stroke="#17352a" stroke-width="1.1" stroke-linejoin="round" stroke-linecap="round"><circle cx="5.2" cy="5.2" r="4.4"/><path d="M8.4 8.4 L11.4 11.4"/><rect x="3.4" y="3.4" width="3.6" height="3.6" rx="0.5"/></g></svg>
<svg style="left:60.5px;top:549.5px" width="12" height="12" viewBox="0 0 12 12"><g fill="none" stroke="#e8e8e8" stroke-width="1.1" stroke-linejoin="round" stroke-linecap="round"><rect x="1.2" y="1" width="9.6" height="8.6" rx="1.6"/><path d="M0.4 3.6 H2.6 M0.4 7 H2.6 M4.4 3.8 H8.6 M4.4 6.6 H8.6"/></g></svg>
<svg style="left:110.5px;top:548.5px" width="12" height="12" viewBox="0 0 12 12"><g fill="none" stroke="#e8e8e8" stroke-width="1.1" stroke-linejoin="round" stroke-linecap="round"><rect x="1" y="1" width="10" height="10" rx="2"/><path d="M6 3.4 L8.4 6.2 V8.6 H3.6 V6.2 Z" fill="#e8e8e8"/></g></svg>
<svg style="left:160px;top:548.5px" width="12" height="12" viewBox="0 0 12 12"><g fill="none" stroke="#e8e8e8" stroke-width="1.1" stroke-linejoin="round" stroke-linecap="round"><path d="M0.8 5 L11.2 0.8 L7.6 11.2 L5.6 6.6 Z M5.6 6.6 L11.2 0.8"/><path d="M3 8 L1.6 10.6"/></g></svg>
<svg style="left:209.5px;top:548.5px" width="12" height="12" viewBox="0 0 12 12"><g fill="none" stroke="#e8e8e8" stroke-width="1.1" stroke-linejoin="round" stroke-linecap="round"><path d="M6 1.4 H1.4 V10.6 H10.6 V6"/><path d="M4.4 7.8 L5 5.6 L9.8 0.8 L11.2 2.2 L6.4 7 Z"/></g></svg>
<svg style="left:259px;top:548.5px" width="12" height="12" viewBox="0 0 12 12"><g fill="none" stroke="#e8e8e8" stroke-width="1.1" stroke-linejoin="round" stroke-linecap="round"><path d="M4 9.4 V1.6 H10 V6"/><circle cx="2.6" cy="9.6" r="1.5" fill="#e8e8e8"/><path d="M6.4 6 H11.4 V11.4 L8.9 9.6 L6.4 11.4 Z" fill="#e8e8e8"/></g></svg>
<span class="t" id="stat" style="left:319px;top:549.5px;font-size:10.6px;color:#ececec">x:1298,y:178 | hWnd:&amp;H1B0B3A,x:660,y:-15</span>
<div style="left:8px;top:567px;width:147px;height:16px;background:#fff"></div>
<div style="left:8px;top:584px;width:147.5px;height:67.5px;background:#4a4a4a;border:1px solid #d0d0d0"></div>
<span class="t" id="hl0" style="left:163px;top:569px;font-size:10.15px;color:#ececec">小提示： <b style="font-family:'DejaVu Sans',sans-serif;font-size:9.5px;letter-spacing:-3px;margin-right:3px">↑↑↑</b> 可拖动上面边沿改变提示框大小</span>
<span class="t" id="hl1" style="left:163px;top:583.35px;font-size:10.15px;color:#ececec">支持中文名变量和函数，自动备份与自动同步。</span>
<span class="t" id="hl2" style="left:163px;top:597.7px;font-size:10.15px;color:#ececec">点击任何字符都有相关提示，在此处有相关帮助提示。</span>
<span class="t" id="hl3" style="left:163px;top:612.05px;font-size:10.15px;color:#ececec">有任何建议请联系勇芳：www.yfvb.com</span>
<div class="sb" style="left:739.5px;top:566px;width:14.5px;height:88px;"></div>
<svg style="left:743.5px;top:572.5px" width="7" height="4" viewBox="0 0 7 4"><path d="M0 4 L3.5 0 L7 4 Z" fill="#8a8a8a"/></svg>
<svg style="left:743.5px;top:644.5px" width="7" height="4" viewBox="0 0 7 4"><path d="M0 0 L3.5 4 L7 0 Z" fill="#8a8a8a"/></svg>

</div><!-- /.win -->

</body>
</html>
